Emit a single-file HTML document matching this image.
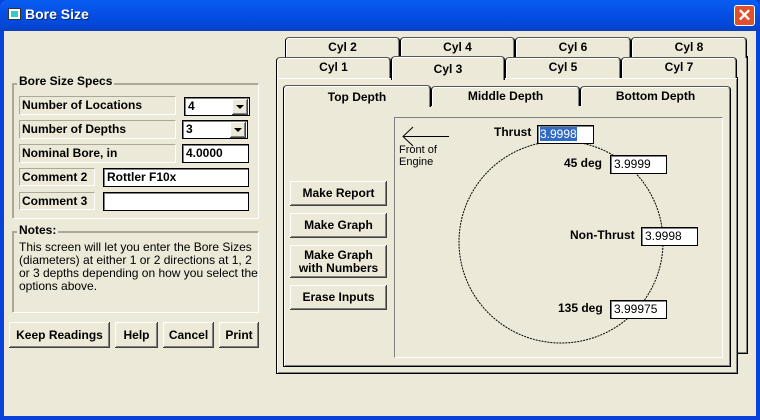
<!DOCTYPE html>
<html><head><meta charset="utf-8"><style>
*{margin:0;padding:0;box-sizing:border-box}
body{width:760px;height:420px;overflow:hidden;background:#0842d8;font-family:"Liberation Sans",sans-serif;font-size:12px;color:#000;position:relative}
.a{position:absolute}
#title{left:0;top:0;width:760px;height:31px;background:linear-gradient(#0a5df0,#0550e6 40%,#0348d8 80%,#0a3fc0);border-radius:7px 7px 0 0}
#body{left:4px;top:31px;width:752px;height:385px;background:#ece9d8}
.b{font-weight:bold}
.lbl{background:#ece9d8;border:1px solid;border-color:#aca899 #fff #fff #aca899;font-weight:bold;padding:1px 2px;line-height:15px;white-space:nowrap}
.inp{background:#fff;border:1px solid #000;box-shadow:inset 1px 1px #808080;font-weight:bold;padding:1px 3px;line-height:15px;font-size:12px}
.btn{background:#ece9d8;box-shadow:inset -1px -1px #404040,inset 1px 1px #fff,inset -2px -2px #808080;font-weight:bold;text-align:center;line-height:13px;display:flex;align-items:center;justify-content:center}
.grp{border:1px solid;border-color:#aca899 #fff #fff #aca899;box-shadow:1px 1px 0 #aca899 inset}
.tab{background:#ece9d8;border:1px solid #000;border-bottom:none;border-top-color:#555;border-radius:4px 4px 0 0;box-shadow:inset 1px 1px #fff,inset -1px 0 #808080;font-weight:bold;text-align:center;line-height:19px}
.panel{background:#ece9d8;border:1px solid #000;box-shadow:inset 1px 1px #fff,inset -1px -1px #808080}
.dd{position:absolute;right:1px;top:1px;width:16px;height:16px;background:#ece9d8;box-shadow:inset -1px -1px #404040,inset 1px 1px #fff,inset -2px -2px #808080}
.dd:after{content:"";position:absolute;left:4px;top:6px;border:4px solid transparent;border-top:4px solid #000;border-bottom:none}
</style></head><body>
<div id="title" class="a">
 <div class="a" style="left:8px;top:8px;width:13px;height:12px;background:#fff;border:1px solid #333"><div style="margin:2px;height:6px;background:#3cc"></div></div>
 <div class="a b" style="left:25px;top:6px;color:#fff;font-size:14px;text-shadow:1px 1px #0a2a80">Bore Size</div>
 <div class="a" style="left:734px;top:5px;width:21px;height:21px;background:#e0502a;border:1px solid #fff;border-radius:3px;color:#fff;font-size:17px;font-weight:bold;text-align:center;line-height:19px">✕</div>
</div>
<div id="body" class="a"></div>

<!-- Bore size specs -->
<div class="a grp" style="left:12px;top:83px;width:247px;height:136px"></div>
<div class="a b" style="left:17px;top:74px;background:#ece9d8;padding:0 2px;font-size:12px">Bore Size Specs</div>
<div class="a lbl" style="left:19px;top:96px;width:157px;height:19px">Number of Locations</div>
<div class="a inp" style="left:184px;top:97px;width:66px;height:19px">4<div class="dd"></div></div>
<div class="a lbl" style="left:19px;top:120px;width:157px;height:19px">Number of Depths</div>
<div class="a inp" style="left:182px;top:120px;width:66px;height:19px">3<div class="dd"></div></div>
<div class="a lbl" style="left:19px;top:144px;width:157px;height:19px">Nominal Bore, in</div>
<div class="a inp" style="left:182px;top:144px;width:67px;height:19px">4.0000</div>
<div class="a lbl" style="left:19px;top:168px;width:76px;height:18px">Comment 2</div>
<div class="a inp" style="left:103px;top:168px;width:146px;height:19px">Rottler F10x</div>
<div class="a lbl" style="left:19px;top:192px;width:76px;height:18px">Comment 3</div>
<div class="a inp" style="left:103px;top:192px;width:146px;height:19px"></div>

<!-- Notes -->
<div class="a grp" style="left:12px;top:231px;width:247px;height:82px"></div>
<div class="a b" style="left:17px;top:223px;background:#ece9d8;padding:0 2px">Notes:</div>
<div class="a" style="left:19px;top:241px;width:240px;line-height:13px;font-size:12px">This screen will let you enter the Bore Sizes (diameters) at either 1 or 2 directions at 1, 2 or 3 depths depending on how you select the options above.</div>

<div class="a btn" style="left:9px;top:322px;width:101px;height:26px">Keep Readings</div>
<div class="a btn" style="left:115px;top:322px;width:43px;height:26px">Help</div>
<div class="a btn" style="left:163px;top:322px;width:51px;height:26px">Cancel</div>
<div class="a btn" style="left:219px;top:322px;width:40px;height:26px">Print</div>

<!-- Cylinder tabs -->
<div class="a panel" style="left:286px;top:56px;width:462px;height:298px"></div>
<div class="a tab" style="left:285px;top:37px;width:115px;height:21px">Cyl 2</div>
<div class="a tab" style="left:400px;top:37px;width:115px;height:21px">Cyl 4</div>
<div class="a tab" style="left:515px;top:37px;width:116px;height:21px">Cyl 6</div>
<div class="a tab" style="left:631px;top:37px;width:116px;height:21px">Cyl 8</div>
<div class="a panel" style="left:276px;top:77px;width:462px;height:297px"></div>
<div class="a tab" style="left:276px;top:57px;width:115px;height:21px">Cyl 1</div>
<div class="a tab" style="left:505px;top:57px;width:116px;height:21px">Cyl 5</div>
<div class="a tab" style="left:621px;top:57px;width:116px;height:21px">Cyl 7</div>
<div class="a tab" style="left:391px;top:56px;width:114px;height:24px;line-height:24px;z-index:2;background:#ece9d8">Cyl 3</div>

<!-- Depth tabs -->
<div class="a panel" style="left:283px;top:104px;width:448px;height:263px"></div>
<div class="a tab" style="left:431px;top:86px;width:149px;height:20px;line-height:18px">Middle Depth</div>
<div class="a tab" style="left:580px;top:86px;width:151px;height:20px;line-height:18px">Bottom Depth</div>
<div class="a tab" style="left:283px;top:85px;width:148px;height:22px;line-height:22px;z-index:2">Top Depth</div>

<div class="a btn" style="left:290px;top:181px;width:97px;height:25px">Make Report</div>
<div class="a btn" style="left:290px;top:213px;width:97px;height:25px">Make Graph</div>
<div class="a btn" style="left:290px;top:245px;width:97px;height:33px">Make Graph<br>with Numbers</div>
<div class="a btn" style="left:290px;top:285px;width:97px;height:25px">Erase Inputs</div>

<!-- graph frame -->
<div class="a" style="left:394px;top:117px;width:329px;height:241px;border:1px solid;border-color:#808080 #fff #fff #808080"></div>
<svg class="a" style="left:0;top:0" width="760" height="420">
 <ellipse cx="561" cy="242" rx="102" ry="101" fill="none" stroke="#000" stroke-width="1" stroke-dasharray="2 1"/>
 <line x1="403" y1="136.5" x2="449" y2="136.5" stroke="#000"/>
 <polyline points="413,127 403,136.5 413,146" fill="none" stroke="#000"/>
</svg>
<div class="a" style="left:399px;top:144px;font-size:11px;line-height:12px">Front of<br>Engine</div>
<div class="a b" style="left:494px;top:125px">Thrust</div>
<div class="a inp" style="left:537px;top:125px;width:57px;height:19px;padding-left:2px"><span style="background:#316ac5;color:#fff;font-weight:normal">3.9998</span></div>
<div class="a b" style="left:564px;top:156px">45 deg</div>
<div class="a inp" style="left:610px;top:155px;width:57px;height:19px;font-weight:normal">3.9999</div>
<div class="a b" style="left:570px;top:228px">Non-Thrust</div>
<div class="a inp" style="left:641px;top:227px;width:57px;height:19px;font-weight:normal">3.9998</div>
<div class="a b" style="left:558px;top:301px">135 deg</div>
<div class="a inp" style="left:610px;top:300px;width:57px;height:19px;font-weight:normal">3.99975</div>
</body></html>
